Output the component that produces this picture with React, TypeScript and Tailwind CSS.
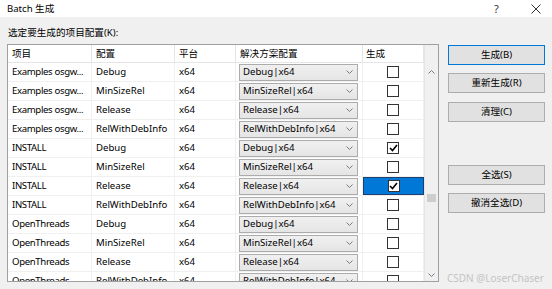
import React from "react";

type Row = {
  project: string;
  config: string;
  solution: string;
  build: boolean;
  selected?: boolean;
};

const ROWS: Row[] = [
  { project: "Examples osgw...", config: "Debug", solution: "Debug|x64", build: false },
  { project: "Examples osgw...", config: "MinSizeRel", solution: "MinSizeRel|x64", build: false },
  { project: "Examples osgw...", config: "Release", solution: "Release|x64", build: false },
  { project: "Examples osgw...", config: "RelWithDebInfo", solution: "RelWithDebInfo|x64", build: false },
  { project: "INSTALL", config: "Debug", solution: "Debug|x64", build: true },
  { project: "INSTALL", config: "MinSizeRel", solution: "MinSizeRel|x64", build: false },
  { project: "INSTALL", config: "Release", solution: "Release|x64", build: true, selected: true },
  { project: "INSTALL", config: "RelWithDebInfo", solution: "RelWithDebInfo|x64", build: false },
  { project: "OpenThreads", config: "Debug", solution: "Debug|x64", build: false },
  { project: "OpenThreads", config: "MinSizeRel", solution: "MinSizeRel|x64", build: false },
  { project: "OpenThreads", config: "Release", solution: "Release|x64", build: false },
  { project: "OpenThreads", config: "RelWithDebInfo", solution: "RelWithDebInfo|x64", build: false },
];

const FONT = { fontFamily: '"Noto Sans", "Noto Sans CJK SC", sans-serif' };

function Chevron({ up = false }: { up?: boolean }) {
  return (
    <svg width="7" height="4" viewBox="0 0 7 4" className="shrink-0">
      <path
        d={up ? "M0.5 3.5 L3.5 0.5 L6.5 3.5" : "M0.5 0.5 L3.5 3.5 L6.5 0.5"}
        fill="none"
        stroke="#7a7a7a"
        strokeWidth="1"
      />
    </svg>
  );
}

function CheckBox({ checked }: { checked: boolean }) {
  return (
    <div className="w-[12px] h-[12px] border border-[#333333] bg-white flex items-center justify-center">
      {checked && (
        <svg width="9" height="8" viewBox="0 0 9 8">
          <path d="M1 4 L3.5 6.5 L8 1" fill="none" stroke="#000" strokeWidth="1.6" />
        </svg>
      )}
    </div>
  );
}

function Btn({ label, primary = false }: { label: string; primary?: boolean }) {
  return (
    <div
      className={
        primary
          ? "w-[97px] h-[20px] bg-[#e1e1e1] border border-[#0078d7] flex items-center justify-center"
          : "w-[97px] h-[20px] bg-[#e1e1e1] border border-[#adadad] flex items-center justify-center"
      }
    >
      {label}
    </div>
  );
}

export default function App() {
  return (
    <div
      className="relative w-[552px] h-[289px] bg-[#f0f0f0] flex flex-col overflow-hidden text-[9.6px] text-black leading-none"
      style={FONT}
    >
      {/* title bar */}
      <div className="h-[17px] bg-white flex items-center pl-[7px] shrink-0">
        <span className="flex-1">Batch 生成</span>
        <span className="text-[11px] text-[#333] w-[10px] mr-[27px]">?</span>
        <svg width="10" height="10" viewBox="0 0 10 10" className="mr-[11px]">
          <path d="M0.5 0.5 L9.5 9.5 M9.5 0.5 L0.5 9.5" stroke="#333" strokeWidth="1" />
        </svg>
      </div>

      <div className="flex flex-1">
        {/* left: label + grid */}
        <div className="pl-[7px] pt-[10px]">
          <div className="h-[12px] flex items-center pl-[1px]">选定要生成的项目配置(K):</div>
          <div className="mt-[5px] w-[432px] h-[238px] border border-[#a0a0a0] bg-white flex overflow-hidden">
            <div className="w-[416px] flex flex-col shrink-0">
              <div className="h-[18px] flex border-b border-[#e5e5e5] shrink-0">
                <div className="w-[84px] px-[4px] flex items-center border-r border-[#e5e5e5]">项目</div>
                <div className="w-[83px] px-[4px] flex items-center border-r border-[#e5e5e5]">配置</div>
                <div className="w-[61px] px-[4px] flex items-center border-r border-[#e5e5e5]">平台</div>
                <div className="w-[127px] px-[4px] flex items-center border-r border-[#e5e5e5]">解决方案配置</div>
                <div className="w-[61px] px-[3px] flex items-center border-r border-[#e5e5e5]">生成</div>
              </div>
              {ROWS.map((r, i) => (
                <div key={i} className="h-[19px] flex border-b border-[#f0f0f0] shrink-0">
                  <div className="w-[84px] pl-[4px] flex items-center border-r border-[#f0f0f0] whitespace-nowrap tracking-[-0.35px]">
                    {r.project}
                  </div>
                  <div className="w-[83px] px-[4px] flex items-center border-r border-[#f0f0f0]">{r.config}</div>
                  <div className="w-[61px] px-[4px] flex items-center border-r border-[#f0f0f0]">x64</div>
                  <div className="w-[127px] pl-[3px] pr-[4px] flex items-center border-r border-[#f0f0f0]">
                    <div className="w-[120px] h-[17px] border border-[#acacac] bg-gradient-to-b from-[#f0f0f0] to-[#e5e5e5] flex items-center pl-[3px] pr-[4px]">
                      <span className="flex-1">{r.solution}</span>
                      <Chevron />
                    </div>
                  </div>
                  <div
                    className={
                      r.selected
                        ? "w-[61px] flex items-center justify-center bg-[#0078d7] border border-[#1c3f6e]"
                        : "w-[61px] flex items-center justify-center border-r border-[#f0f0f0]"
                    }
                  >
                    <CheckBox checked={r.build} />
                  </div>
                </div>
              ))}
            </div>
            {/* scrollbar */}
            <div className="w-[14px] bg-[#f0f0f0] flex flex-col shrink-0 border-l border-[#e5e5e5]">
              <div className="h-[18px] shrink-0" />
              <div className="h-[17px] flex items-center justify-center shrink-0">
                <Chevron up />
              </div>
              <div className="h-[114px] shrink-0" />
              <div className="h-[8px] mx-[2px] bg-[#cdcdcd] shrink-0" />
              <div className="flex-1" />
              <div className="h-[17px] flex items-center justify-center shrink-0 pt-[4px]">
                <Chevron />
              </div>
            </div>
          </div>
        </div>

        {/* right: buttons */}
        <div className="ml-[9px] pt-[28px] flex flex-col">
          <Btn label="生成(B)" primary />
          <div className="h-[8px]" />
          <Btn label="重新生成(R)" />
          <div className="h-[9px]" />
          <Btn label="清理(C)" />
          <div className="h-[43px]" />
          <Btn label="全选(S)" />
          <div className="h-[8px]" />
          <Btn label="撤消全选(D)" />
          <div className="flex-1" />
          <div className="text-[10px] text-[#c4c4c4] mb-[6px] -ml-[1px] whitespace-nowrap">CSDN @LoserChaser</div>
        </div>
      </div>
    </div>
  );
}
